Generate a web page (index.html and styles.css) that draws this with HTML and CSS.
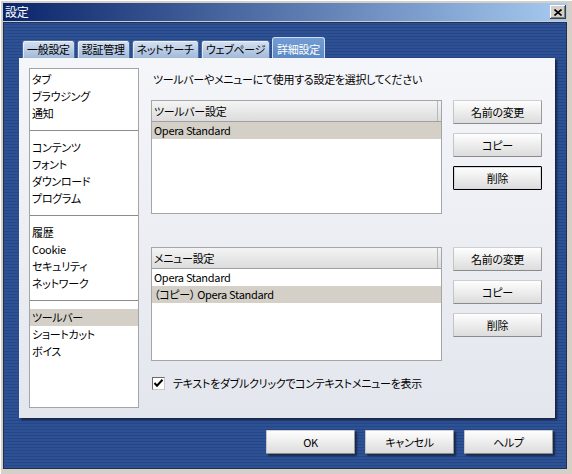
FILE: index.html
```html
<!DOCTYPE html>
<html lang="ja">
<head>
  <meta charset="UTF-8">
  <title>設定</title>
  <link rel="stylesheet" href="styles.css">
</head>
<body>

  <div class="window">
    <div class="titlebar">
      <span class="title">設定</span>
      <button class="close">
        <svg width="8" height="7" viewBox="0 0 8 7">
          <path d="M0.5 0.5 L7.5 6.5 M7.5 0.5 L0.5 6.5" stroke="#000" stroke-width="1.6" fill="none"/>
        </svg>
      </button>
    </div>

    <div class="client">
      <div class="tabs">
        <div class="tab">一般設定</div>
        <div class="tab">認証管理</div>
        <div class="tab">ネットサーチ</div>
        <div class="tab">ウェブページ</div>
        <div class="tab active">詳細設定</div>
      </div>

      <div class="panel">
        <ul class="side-list">
          <li>タブ</li>
          <li>ブラウジング</li>
          <li>通知</li>
          <li class="sep"></li>
          <li>コンテンツ</li>
          <li>フォント</li>
          <li>ダウンロード</li>
          <li>プログラム</li>
          <li class="sep"></li>
          <li>履歴</li>
          <li>Cookie</li>
          <li>セキュリティ</li>
          <li>ネットワーク</li>
          <li class="sep"></li>
          <li class="selected">ツールバー</li>
          <li>ショートカット</li>
          <li>ボイス</li>
        </ul>

        <div class="content">
          <p class="hint">ツールバーやメニューにて使用する設定を選択してください</p>

          <div class="setting">
            <div class="listbox">
              <div class="listbox-head"><span>ツールバー設定</span></div>
              <div class="listbox-item selected">Opera Standard</div>
            </div>
            <div class="btn-col">
              <button class="btn">名前の変更</button>
              <button class="btn">コピー</button>
              <button class="btn default">削除</button>
            </div>
          </div>

          <div class="setting">
            <div class="listbox">
              <div class="listbox-head"><span>メニュー設定</span></div>
              <div class="listbox-item">Opera Standard</div>
              <div class="listbox-item selected">（コピー） Opera Standard</div>
            </div>
            <div class="btn-col">
              <button class="btn">名前の変更</button>
              <button class="btn">コピー</button>
              <button class="btn">削除</button>
            </div>
          </div>

          <label class="check">
            <span class="checkbox">
              <svg width="11" height="11" viewBox="0 0 11 11">
                <path d="M1.5 5 L4 7.8 L9.5 1.8" stroke="#000" stroke-width="2" fill="none"/>
              </svg>
            </span>
            テキストをダブルクリックでコンテキストメニューを表示
          </label>
        </div>
      </div>

      <div class="dialog-buttons">
        <button class="btn">OK</button>
        <button class="btn">キャンセル</button>
        <button class="btn">ヘルプ</button>
      </div>
    </div>
  </div>

</body>
</html>
```

FILE: styles.css
```css
/* Dialog frame */
body {
  margin: 0;
  font-family: "Noto Sans CJK JP", sans-serif;
  font-size: 11px;
  letter-spacing: -0.3px;
  font-feature-settings: "palt";
  color: #000;
}

.window {
  width: 572px;
  height: 474px;
  box-sizing: border-box;
  padding: 3px 5px 5px 3px;
  background: #d4d0c8;
  box-shadow: inset 1px 1px #fff;
  display: flex;
  flex-direction: column;
}

.titlebar {
  height: 18px;
  border-bottom: 1px solid #c8ccd6;
  padding: 0 1px 0 2px;
  background: linear-gradient(to right, #0a246a, #a6caf0);
  display: flex;
  align-items: center;
  justify-content: space-between;
  color: #fff;
}

.title {
  font-size: 12px;
  line-height: 18px;
}

.close {
  width: 16px;
  height: 14px;
  padding: 0;
  border: none;
  background: #d4d0c8;
  box-shadow: inset -1px -1px #404040, inset 1px 1px #fff, inset -2px -2px #808080;
  display: flex;
  align-items: center;
  justify-content: center;
}

.client {
  flex: 1;
  padding: 15px 12px 15px 16px;
  background: repeating-linear-gradient(to bottom, #2d5192 0 2px, #26468a 2px 3px);
  box-shadow: inset 0 0 0 1px #22324e;
  display: flex;
  flex-direction: column;
}

/* Tabs */
.tabs {
  height: 21px;
  margin-left: 3px;
  display: flex;
  align-items: flex-end;
  gap: 2px;
}

.tab {
  height: 17px;
  line-height: 17px;
  padding: 0 4px;
  border: 1px solid #4d6b9c;
  border-bottom: none;
  border-radius: 3px 3px 0 0;
  background: linear-gradient(#d6e2f2, #a2b9d9);
  box-shadow: inset 1px 1px rgba(255, 255, 255, 0.6);
}

.tab.active {
  height: 17px;
  padding-top: 3px;
  border-color: #d2dff2;
  background: linear-gradient(#729dd4, #5d89c4);
  box-shadow: none;
  color: #fff;
}

/* Page */
.panel {
  height: 360px;
  box-sizing: border-box;
  padding: 10px 13px 10px 10px;
  background: linear-gradient(#f5f6fa, #e3e6ed);
  box-shadow: 2px 2px 2px rgba(0, 0, 0, 0.55);
  display: flex;
  gap: 12px;
}

.side-list {
  width: 110px;
  box-sizing: border-box;
  margin: 0;
  padding: 2px 0 0;
  list-style: none;
  border: 1px solid #a5a5a5;
  background: #fff;
}

.side-list li {
  line-height: 17px;
  padding-left: 2px;
}

.side-list .sep {
  height: 0;
  padding: 0;
  margin: 8px 0;
  border-top: 1px solid #8c8c8c;
}

.side-list .selected {
  background: #d4d0c8;
}

.content {
  flex: 1;
  display: flex;
  flex-direction: column;
}

.hint {
  margin: 3px 0 12px 2px;
  line-height: 17px;
}

.setting {
  display: flex;
  gap: 11px;
}

.setting + .setting {
  margin-top: 33px;
}

.listbox {
  width: 291px;
  height: 114px;
  box-sizing: border-box;
  border: 1px solid #a5a5a5;
  background: #fff;
}

.listbox-head {
  height: 20px;
  border-bottom: 1px solid #a0a0a0;
  background: linear-gradient(#f4f4f4, #dcdcdc);
  display: flex;
}

.listbox-head span {
  flex: 1;
  margin-right: 3px;
  padding-left: 2px;
  line-height: 20px;
  border-right: 1px solid #b8b8b8;
}

.listbox-item {
  line-height: 17px;
  padding-left: 2px;
}

.listbox-item.selected {
  background: #d4d0c8;
}

.btn-col {
  display: flex;
  flex-direction: column;
  gap: 9px;
}

.btn {
  width: 89px;
  height: 24px;
  padding: 0;
  font: inherit;
  letter-spacing: inherit;
  font-feature-settings: "palt";
  color: #000;
  border: 1px solid;
  border-color: #cfcfcf #9a9a9a #8a8a8a #c4c4c4;
  border-radius: 1px;
  background: linear-gradient(#fefefe, #dcdcdc);
}

.btn.default {
  border-color: #000;
  box-shadow: inset 0 0 0 1px #d8d8d8;
}

.check {
  margin-top: 14px;
  padding-left: 1px;
  line-height: 17px;
  display: flex;
  align-items: center;
  gap: 8px;
}

.checkbox {
  width: 13px;
  height: 13px;
  box-sizing: border-box;
  border: 1px solid;
  border-color: #6a6a6a #c8c8c8 #c8c8c8 #6a6a6a;
  background: #fff;
  display: flex;
  align-items: center;
  justify-content: center;
}

/* Dialog buttons */
.dialog-buttons {
  margin-top: 12px;
  padding-right: 2px;
  display: flex;
  justify-content: flex-end;
  gap: 10px;
}

.dialog-buttons .btn {
  box-shadow: 2px 2px 2px rgba(0, 0, 0, 0.5);
}
```
